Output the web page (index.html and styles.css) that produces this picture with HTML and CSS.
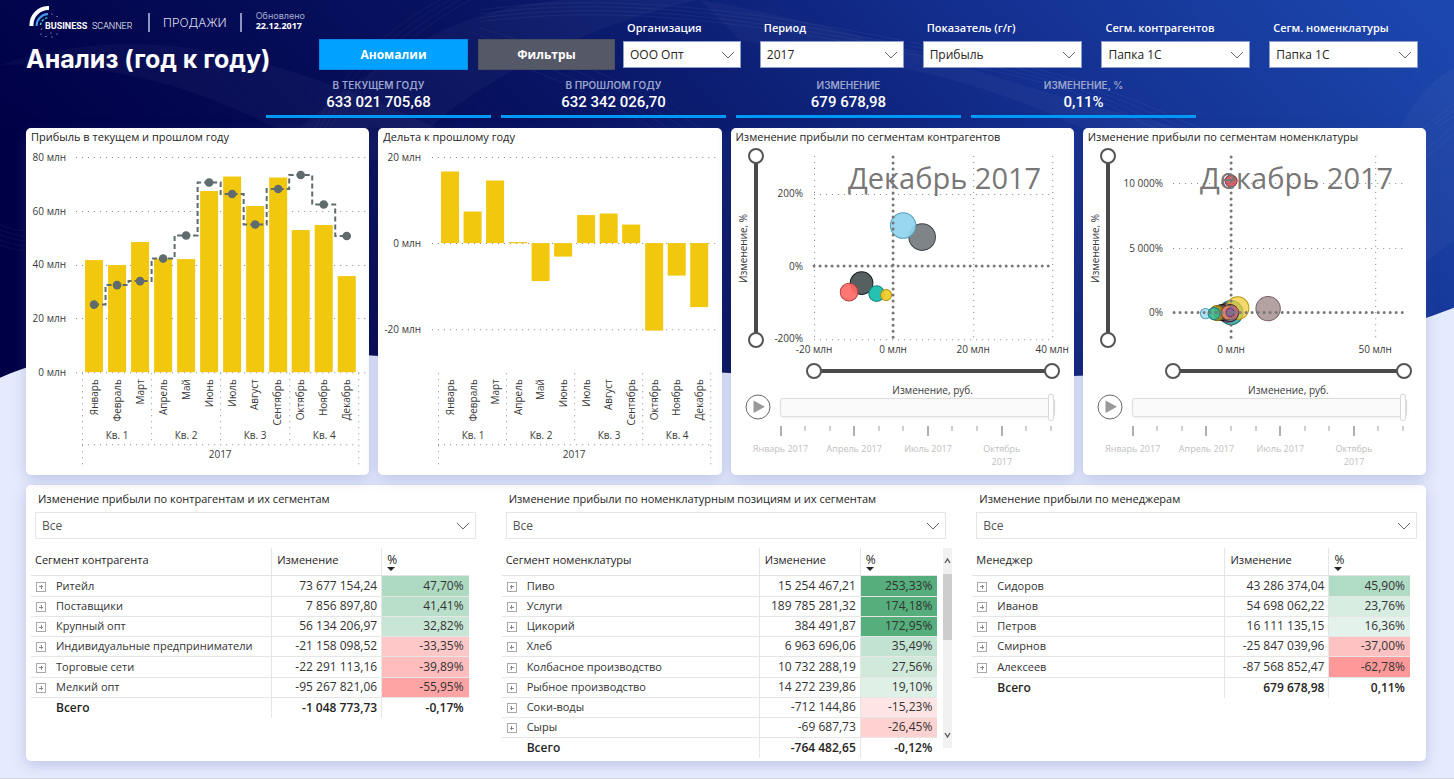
FILE: index.html
```
<!DOCTYPE html>
<html lang="ru">
<head>
<meta charset="utf-8">
<meta name="viewport" content="width=device-width, initial-scale=1">
<title>Анализ (год к году)</title>
<link rel="stylesheet" href="styles.css">
</head>
<body>
<div class="page">
  <svg class="backdrop" viewBox="0 0 1454 779" preserveAspectRatio="none" aria-hidden="true">
    <defs>
      <linearGradient id="sky" x1="0" y1="0.35" x2="1" y2="0.1">
        <stop offset="0" stop-color="#000046"/>
        <stop offset="0.35" stop-color="#07125f"/>
        <stop offset="0.7" stop-color="#132f8f"/>
        <stop offset="1" stop-color="#1c47ae"/>
      </linearGradient>
    </defs>
    <rect width="1454" height="779" fill="#e5ebfe"/>
    <path fill="url(#sky)" d="M0 0H1454V308C1340 352 1220 370 1080 376C980 380 850 379 725 373C620 368 500 360 375 356C250 349 110 330 0 378Z"/>
    <path fill="#fff" fill-opacity="0.03" d="M0 65C90 35 180 40 260 62C340 84 420 118 500 160H330C220 90 120 62 0 65Z"/>
    <path fill="#fff" fill-opacity="0.03" d="M300 128C380 60 450 10 560 0H700C600 20 480 80 430 128Z"/>
    <path fill="#fff" fill-opacity="0.03" d="M700 0C880 30 980 80 1180 128H1080C960 70 860 60 740 40Z"/>
    <path fill="#fff" fill-opacity="0.03" d="M1400 128C1420 90 1440 75 1454 68V240L1426 262V128Z"/>
    <g fill="none" stroke="#fff" stroke-opacity="0.05">
      <path d="M315 128C350 60 400 20 440 0"/><path d="M320 128C356 62 408 22 450 0"/><path d="M325 128C362 64 416 24 460 0"/><path d="M330 128C368 66 424 26 470 0"/>
      <path d="M480 10C640 -12 800 20 960 52S1150 110 1200 128"/><path d="M480 14C640 -8 800 24 960 56S1140 112 1185 128"/><path d="M480 18C640 -4 800 28 960 60S1130 114 1170 128"/><path d="M480 22C640 0 800 32 960 64S1120 116 1155 128"/>
      <path d="M480 28C560 50 640 90 700 128"/><path d="M480 36C556 58 630 94 684 128"/><path d="M480 44C552 66 620 98 668 128"/><path d="M480 52C548 74 610 102 652 128"/>
      <path d="M0 225C10 229 20 231 26 231M0 230C10 234 20 236 26 236M0 235C10 239 20 241 26 241M0 240C10 244 20 246 26 246M0 245C10 249 20 251 26 251"/>
      <path d="M1424 128L1454 104M1430 128L1454 110M1436 128L1454 116M1426 150L1454 126M1426 158L1454 134"/>
    </g>
  </svg>

  <header class="header">
    <div class="top">
      <div class="brand">
        <div class="brand-line">
          <svg class="logo" width="106" height="32" viewBox="26 5 106 32" role="img" aria-label="Business Scanner">
            <path d="M31.500 25A17 17 0 0 1 49 7" fill="none" stroke="#fff" stroke-width="4"/>
            <path d="M36.500 25A12 12 0 0 1 48 13" fill="none" stroke="#4c9be8" stroke-width="2"/>
            <path d="M40.500 24A9 9 0 0 1 48 16.500" fill="none" stroke="#3cc6b4" stroke-width="1.500" stroke-dasharray="2.500 1.500"/>
            <g fill="#cdd3ea"><circle cx="52" cy="13" r=".6"/><circle cx="57" cy="15.500" r=".6"/><circle cx="41" cy="33" r=".6"/><circle cx="46" cy="35.500" r=".6"/><circle cx="52" cy="36" r=".6"/><circle cx="57" cy="33" r=".6"/><circle cx="41.500" cy="28" r=".6"/><circle cx="51" cy="32" r=".6"/></g>
            <text class="logo-bold" x="45" y="28">BUSINESS</text>
            <text class="logo-thin" x="92" y="28">SCANNER</text>
          </svg>
          <span class="section">ПРОДАЖИ</span>
          <p class="updated">Обновлено<b>22.12.2017</b></p>
        </div>
        <h1>Анализ (год к году)</h1>
      </div>
      <div class="actions">
        <button class="btn btn-primary" type="button">Аномалии</button>
        <button class="btn btn-muted" type="button">Фильтры</button>
      </div>
      <div class="filters">
        <div class="filter"><label for="org">Организация</label><select id="org"><option>ООО Опт</option></select></div>
        <div class="filter"><label for="period">Период</label><select id="period"><option>2017</option></select></div>
        <div class="filter"><label for="metric">Показатель (г/г)</label><select id="metric"><option>Прибыль</option></select></div>
        <div class="filter"><label for="partner">Сегм. контрагентов</label><select id="partner"><option>Папка 1С</option></select></div>
        <div class="filter"><label for="item">Сегм. номенклатуры</label><select id="item"><option>Папка 1С</option></select></div>
      </div>
    </div>
    <dl class="kpis">
      <div class="kpi"><dt>В ТЕКУЩЕМ ГОДУ</dt><dd>633 021 705,68</dd></div>
      <div class="kpi"><dt>В ПРОШЛОМ ГОДУ</dt><dd>632 342 026,70</dd></div>
      <div class="kpi"><dt>ИЗМЕНЕНИЕ</dt><dd>679 678,98</dd></div>
      <div class="kpi"><dt>ИЗМЕНЕНИЕ, %</dt><dd>0,11%</dd></div>
    </dl>
  </header>

  <main class="content">
    <div class="cards">
      <section class="card">
        <h2>Прибыль в текущем и прошлом году</h2>
        <svg class="chart" viewBox="26 148 343 327" role="img" aria-label="Прибыль по месяцам">
          <g class="grid"><path d="M76 157.500H365M76 211.500H365M76 265.500H365M76 318.500H365M76 372.500H365"/></g>
          <g class="lbl end"><text x="66" y="161">80 млн</text><text x="66" y="215">60 млн</text><text x="66" y="268">40 млн</text><text x="66" y="322">20 млн</text><text x="66" y="376">0 млн</text></g>
          <g class="bars">
            <rect x="85" y="260" width="18" height="112"/><rect x="108" y="265" width="18" height="107"/><rect x="131" y="242" width="18" height="130"/>
            <rect x="154" y="258.500" width="18" height="113.500"/><rect x="177" y="259" width="18" height="113"/><rect x="200" y="191" width="18" height="181"/>
            <rect x="223" y="176.500" width="18" height="195.500"/><rect x="246" y="206" width="18" height="166"/><rect x="269" y="177.500" width="18" height="194.500"/>
            <rect x="291.500" y="230" width="18" height="142"/><rect x="314.500" y="225" width="18" height="147"/><rect x="337.500" y="276" width="18" height="96"/>
          </g>
          <path class="step" d="M94 304.500H105.500V285H128.500V281H151.500V258.500H174.500V235.500H197.500V182.500H220.500V194H243.500V224.500H266.500V189H289V175H312V204.500H335V236H346.500"/>
          <g class="dots"><circle cx="94" cy="304.500" r="4.300"/><circle cx="117" cy="285" r="4.300"/><circle cx="140" cy="281" r="4.300"/><circle cx="163" cy="258.500" r="4.300"/><circle cx="186" cy="235.500" r="4.300"/><circle cx="209" cy="182.500" r="4.300"/><circle cx="232" cy="194" r="4.300"/><circle cx="255" cy="224.500" r="4.300"/><circle cx="278" cy="189" r="4.300"/><circle cx="300.500" cy="175" r="4.300"/><circle cx="323.500" cy="204.500" r="4.300"/><circle cx="346.500" cy="236" r="4.300"/></g>
          <g class="grid"><path d="M82.500 373V464M151.500 373V444M220.500 373V444M289.500 373V444M358.500 373V464M82 444.500H358"/></g>
          <g class="lbl end">
            <text transform="translate(98 379) rotate(-90)">Январь</text><text transform="translate(121 379) rotate(-90)">Февраль</text><text transform="translate(144 379) rotate(-90)">Март</text>
            <text transform="translate(167 379) rotate(-90)">Апрель</text><text transform="translate(190 379) rotate(-90)">Май</text><text transform="translate(213 379) rotate(-90)">Июнь</text>
            <text transform="translate(236 379) rotate(-90)">Июль</text><text transform="translate(258 379) rotate(-90)">Август</text><text transform="translate(281 379) rotate(-90)">Сентябрь</text>
            <text transform="translate(304 379) rotate(-90)">Октябрь</text><text transform="translate(327 379) rotate(-90)">Ноябрь</text><text transform="translate(350 379) rotate(-90)">Декабрь</text>
          </g>
          <g class="lbl mid"><text x="117" y="439">Кв. 1</text><text x="186" y="439">Кв. 2</text><text x="255" y="439">Кв. 3</text><text x="324" y="439">Кв. 4</text><text x="220" y="458">2017</text></g>
        </svg>
      </section>

      <section class="card">
        <h2>Дельта к прошлому году</h2>
        <svg class="chart" viewBox="378 148 343 327" role="img" aria-label="Дельта по месяцам">
          <g class="grid"><path d="M432 157.500H715M432 243.500H715M432 329.500H715"/></g>
          <g class="lbl end"><text x="421" y="161">20 млн</text><text x="421" y="247">0 млн</text><text x="421" y="333">-20 млн</text></g>
          <g class="bars">
            <rect x="441" y="171.500" width="18" height="71.500"/><rect x="463.500" y="211.500" width="18" height="31.500"/><rect x="486" y="180.500" width="18" height="62.500"/>
            <rect x="509" y="242" width="18" height="1.200"/><rect x="531.500" y="243" width="18" height="38"/><rect x="554" y="243" width="18" height="13.500"/>
            <rect x="577" y="215" width="18" height="28"/><rect x="599.500" y="213.500" width="18" height="29.500"/><rect x="622" y="224.500" width="18" height="18.500"/>
            <rect x="645" y="243" width="18" height="87.500"/><rect x="667.500" y="243" width="18" height="32.500"/><rect x="690" y="243" width="18" height="64"/>
          </g>
          <g class="grid"><path d="M438.500 373V464M506.500 373V444M574.500 373V444M642.500 373V444M710.500 373V464M438 444.500H710"/></g>
          <g class="lbl end">
            <text transform="translate(454 379) rotate(-90)">Январь</text><text transform="translate(477 379) rotate(-90)">Февраль</text><text transform="translate(499 379) rotate(-90)">Март</text>
            <text transform="translate(522 379) rotate(-90)">Апрель</text><text transform="translate(544 379) rotate(-90)">Май</text><text transform="translate(567 379) rotate(-90)">Июнь</text>
            <text transform="translate(590 379) rotate(-90)">Июль</text><text transform="translate(612 379) rotate(-90)">Август</text><text transform="translate(635 379) rotate(-90)">Сентябрь</text>
            <text transform="translate(658 379) rotate(-90)">Октябрь</text><text transform="translate(680 379) rotate(-90)">Ноябрь</text><text transform="translate(703 379) rotate(-90)">Декабрь</text>
          </g>
          <g class="lbl mid"><text x="473" y="439">Кв. 1</text><text x="541" y="439">Кв. 2</text><text x="609" y="439">Кв. 3</text><text x="677" y="439">Кв. 4</text><text x="574" y="458">2017</text></g>
        </svg>
      </section>

      <section class="card scatter">
        <h2>Изменение прибыли по сегментам контрагентов</h2>
        <div class="plot">
          <span class="axis-name vertical">Изменение, %</span>
          <div class="dual dual-v"><input type="range" value="0" aria-label="Нижняя граница, %"><input type="range" value="100" aria-label="Верхняя граница, %"></div>
          <svg class="chart" viewBox="764 148 310 209" role="img" aria-label="Сегменты контрагентов">
            <g class="lbl end"><text x="803" y="197">200%</text><text x="803" y="270">0%</text><text x="803" y="342">-200%</text></g>
            <g class="lbl mid"><text x="814" y="353">-20 млн</text><text x="893" y="353">0 млн</text><text x="973" y="353">20 млн</text><text x="1052" y="353">40 млн</text></g>
            <g class="grid"><path d="M814.500 156V339M973.500 156V339M1052.500 156V339M814 194.500H1052M814 339.500H1052"/></g>
            <g fill-opacity="0.92">
              <circle cx="922" cy="237" r="13.300" fill="#737a7d" stroke="#3c4547"/>
              <circle cx="903" cy="225.500" r="12.700" fill="#8fd4ec" stroke="#589fba"/>
              <circle cx="861.500" cy="283" r="11.300" fill="#485352" stroke="#161d1f"/>
              <circle cx="849" cy="292" r="8.800" fill="#fd6a66" stroke="#bb4240"/>
              <circle cx="876.500" cy="293.500" r="7.800" fill="#12bcad" stroke="#1b897f"/>
              <circle cx="886" cy="295" r="5.500" fill="#f1cb24" stroke="#ad8d0f"/>
            </g>
            <g class="zero"><path d="M893 157V339M814 266H1052"/></g>
            <text class="stamp" x="1041" y="189">Декабрь 2017</text>
          </svg>
        </div>
        <div class="axis-x">
          <div class="dual dual-h"><input type="range" value="0" aria-label="Нижняя граница, руб."><input type="range" value="100" aria-label="Верхняя граница, руб."></div>
          <span class="axis-name">Изменение, руб.</span>
        </div>
        <div class="player">
          <button class="play" type="button" aria-label="Воспроизвести"><svg width="26" height="26" viewBox="0 0 26 26"><circle cx="13" cy="13" r="12" fill="#fff" stroke="#666"/><path d="M8.500 6.500V19L20 12.700Z" fill="#999"/></svg></button>
          <div class="timeline">
            <input class="time" type="range" min="1" max="12" value="12" aria-label="Месяц">
            <div class="ticks"><i class="major"></i><i></i><i></i><i class="major"></i><i></i><i></i><i class="major"></i><i></i><i></i><i class="major"></i><i></i><i></i></div>
            <div class="months"><span>Январь 2017</span><span>Апрель 2017</span><span>Июль 2017</span><span>Октябрь<br>2017</span></div>
          </div>
        </div>
      </section>

      <section class="card scatter scatter-wide">
        <h2>Изменение прибыли по сегментам номенклатуры</h2>
        <div class="plot">
          <span class="axis-name vertical">Изменение, %</span>
          <div class="dual dual-v"><input type="range" value="0" aria-label="Нижняя граница, %"><input type="range" value="100" aria-label="Верхняя граница, %"></div>
          <svg class="chart" viewBox="1116 148 310 209" role="img" aria-label="Сегменты номенклатуры">
            <g class="lbl end"><text x="1163" y="187">10 000%</text><text x="1163" y="252">5 000%</text><text x="1163" y="316">0%</text></g>
            <g class="lbl mid"><text x="1231" y="353">0 млн</text><text x="1375" y="353">50 млн</text></g>
            <g class="grid"><path d="M1375.500 156V339M1173 183.500H1405M1173 248.500H1405"/></g>
            <g fill-opacity="0.75">
              <circle cx="1231" cy="181" r="6" fill="#c32f38" stroke="#8d2e35"/>
              <circle cx="1268" cy="308.500" r="12.200" fill="#9b8183" stroke="#7b6063"/>
              <circle cx="1231" cy="312.500" r="12" fill="#13938c" stroke="#0f6d68"/>
              <circle cx="1227" cy="312.500" r="9.500" fill="#9b6ba0" stroke="#4f3154"/>
              <circle cx="1222" cy="312.500" r="8" fill="#3b4445" stroke="#111"/>
              <circle cx="1217" cy="313" r="7.500" fill="#c7a21a" stroke="#84690c"/>
              <circle cx="1237.500" cy="308" r="11.300" fill="#f3cc3c" stroke="#b8950f"/>
              <circle cx="1230" cy="313" r="8.500" fill="#8b6aa8" stroke="#222"/>
              <circle cx="1228" cy="312.500" r="7" fill="#ee8c63" stroke="#8e4b30"/>
              <circle cx="1205.500" cy="313.500" r="5.200" fill="#8fd4ec" stroke="#589fba"/>
              <circle cx="1214" cy="313.500" r="6" fill="#20bfa9" stroke="#197f72"/>
              <circle cx="1232" cy="312" r="6" fill="#a8718d" stroke="#dc5a4d"/>
              <circle cx="1230" cy="312.500" r="4" fill="#8a5ca6" stroke="#58386e"/>
            </g>
            <g class="zero"><path d="M1231 157V339M1174 312.500H1405"/></g>
            <text class="stamp" x="1393" y="189">Декабрь 2017</text>
          </svg>
        </div>
        <div class="axis-x">
          <div class="dual dual-h"><input type="range" value="0" aria-label="Нижняя граница, руб."><input type="range" value="100" aria-label="Верхняя граница, руб."></div>
          <span class="axis-name">Изменение, руб.</span>
        </div>
        <div class="player">
          <button class="play" type="button" aria-label="Воспроизвести"><svg width="26" height="26" viewBox="0 0 26 26"><circle cx="13" cy="13" r="12" fill="#fff" stroke="#666"/><path d="M8.500 6.500V19L20 12.700Z" fill="#999"/></svg></button>
          <div class="timeline">
            <input class="time" type="range" min="1" max="12" value="12" aria-label="Месяц">
            <div class="ticks"><i class="major"></i><i></i><i></i><i class="major"></i><i></i><i></i><i class="major"></i><i></i><i></i><i class="major"></i><i></i><i></i></div>
            <div class="months"><span>Январь 2017</span><span>Апрель 2017</span><span>Июль 2017</span><span>Октябрь<br>2017</span></div>
          </div>
        </div>
      </section>
    </div>

    <div class="panel">
      <section class="block">
        <label class="block-title" for="f1">Изменение прибыли по контрагентам и их сегментам</label>
        <select id="f1"><option>Все</option></select>
        <div class="table-wrap">
          <table>
            <colgroup><col><col class="w110"><col class="w87"></colgroup>
            <thead><tr><th>Сегмент контрагента</th><th>Изменение</th><th class="sorted">%</th></tr></thead>
            <tbody>
              <tr><td><button type="button" aria-label="Развернуть"></button>Ритейл</td><td>73 677 154,24</td><td style="background:#addac1">47,70%</td></tr>
              <tr><td><button type="button" aria-label="Развернуть"></button>Поставщики</td><td>7 856 897,80</td><td style="background:#b9dfca">41,41%</td></tr>
              <tr><td><button type="button" aria-label="Развернуть"></button>Крупный опт</td><td>56 134 206,97</td><td style="background:#c8e6d5">32,82%</td></tr>
              <tr><td><button type="button" aria-label="Развернуть"></button>Индивидуальные предприниматели</td><td>-21 158 098,52</td><td style="background:#ffc8c8">-33,35%</td></tr>
              <tr><td><button type="button" aria-label="Развернуть"></button>Торговые сети</td><td>-22 291 113,16</td><td style="background:#ffbdbd">-39,89%</td></tr>
              <tr><td><button type="button" aria-label="Развернуть"></button>Мелкий опт</td><td>-95 267 821,06</td><td style="background:#ffa4a4">-55,95%</td></tr>
            </tbody>
            <tfoot><tr><td>Всего</td><td>-1 048 773,73</td><td>-0,17%</td></tr></tfoot>
          </table>
        </div>
      </section>

      <section class="block">
        <label class="block-title" for="f2">Изменение прибыли по номенклатурным позициям и их сегментам</label>
        <select id="f2"><option>Все</option></select>
        <div class="table-wrap scrolled">
          <table>
            <colgroup><col><col class="w101"><col class="w77"></colgroup>
            <thead><tr><th>Сегмент номенклатуры</th><th>Изменение</th><th class="sorted">%</th></tr></thead>
            <tbody>
              <tr><td><button type="button" aria-label="Развернуть"></button>Пиво</td><td>15 254 467,21</td><td style="background:#55ae7b">253,33%</td></tr>
              <tr><td><button type="button" aria-label="Развернуть"></button>Услуги</td><td>189 785 281,32</td><td style="background:#55ae7b">174,18%</td></tr>
              <tr><td><button type="button" aria-label="Развернуть"></button>Цикорий</td><td>384 491,87</td><td style="background:#55ae7b">172,95%</td></tr>
              <tr><td><button type="button" aria-label="Развернуть"></button>Хлеб</td><td>6 963 696,06</td><td style="background:#c2e3d1">35,49%</td></tr>
              <tr><td><button type="button" aria-label="Развернуть"></button>Колбасное производство</td><td>10 732 288,19</td><td style="background:#d0e9db">27,56%</td></tr>
              <tr><td><button type="button" aria-label="Развернуть"></button>Рыбное производство</td><td>14 272 239,86</td><td style="background:#dff0e6">19,10%</td></tr>
              <tr><td><button type="button" aria-label="Развернуть"></button>Соки-воды</td><td>-712 144,86</td><td style="background:#ffe5e5">-15,23%</td></tr>
              <tr><td><button type="button" aria-label="Развернуть"></button>Сыры</td><td>-69 687,73</td><td style="background:#ffd2d2">-26,45%</td></tr>
            </tbody>
            <tfoot><tr><td>Всего</td><td>-764 482,65</td><td>-0,12%</td></tr></tfoot>
          </table>
          <div class="scrollbar" aria-hidden="true">
            <svg width="9" height="26" viewBox="0 0 9 26"><path d="M2 15L4.500 11L7 15" fill="none" stroke="#555" stroke-width="1.300"/></svg>
            <div class="thumb"></div>
            <svg class="down" width="9" height="26" viewBox="0 0 9 26"><path d="M2 11L4.500 15L7 11" fill="none" stroke="#555" stroke-width="1.300"/></svg>
          </div>
        </div>
      </section>

      <section class="block">
        <label class="block-title" for="f3">Изменение прибыли по менеджерам</label>
        <select id="f3"><option>Все</option></select>
        <div class="table-wrap">
          <table>
            <colgroup><col><col class="w104"><col class="w81"></colgroup>
            <thead><tr><th>Менеджер</th><th>Изменение</th><th class="sorted">%</th></tr></thead>
            <tbody>
              <tr><td><button type="button" aria-label="Развернуть"></button>Сидоров</td><td>43 286 374,04</td><td style="background:#b0dbc4">45,90%</td></tr>
              <tr><td><button type="button" aria-label="Развернуть"></button>Иванов</td><td>54 698 062,22</td><td style="background:#d7ede1">23,76%</td></tr>
              <tr><td><button type="button" aria-label="Развернуть"></button>Петров</td><td>16 111 135,15</td><td style="background:#e3f2ea">16,36%</td></tr>
              <tr><td><button type="button" aria-label="Развернуть"></button>Смирнов</td><td>-25 847 039,96</td><td style="background:#ffc2c2">-37,00%</td></tr>
              <tr><td><button type="button" aria-label="Развернуть"></button>Алексеев</td><td>-87 568 852,47</td><td style="background:#ff9999">-62,78%</td></tr>
            </tbody>
            <tfoot><tr><td>Всего</td><td>679 678,98</td><td>0,11%</td></tr></tfoot>
          </table>
        </div>
      </section>
    </div>
  </main>
</div>
</body>
</html>
```
FILE: styles.css
```
* { box-sizing: border-box; }

body {
  margin: 0;
  font-family: "Open Sans", "Noto Sans", sans-serif;
  font-size: 12px;
  color: #252423;
}

h1, h2, p, dl, dd { margin: 0; }
button, select, input { font: inherit; color: inherit; margin: 0; }

.page {
  position: relative;
  isolation: isolate;
  min-height: 100vh;
  border-bottom: 2px solid #d6d6d6;
}

.backdrop {
  position: absolute;
  inset: 0;
  z-index: -1;
  width: 100%;
  height: 100%;
}

/* Header */
.top { display: flex; padding: 0 36px 0 26px; }
.brand { flex: none; width: 293px; color: #fff; }
.brand-line { display: flex; align-items: center; padding-top: 5px; height: 44px; }
.logo { flex: none; margin-bottom: 6px; }
.logo-bold, .logo-thin { font-family: Roboto, "Open Sans", sans-serif; font-size: 9px; fill: #fff; }
.logo-bold { font-weight: 700; }
.logo-thin { font-weight: 300; }
.section {
  margin: 0 14px 4px 16px;
  padding: 0 13px;
  border-left: 2px solid #8f93bd;
  border-right: 2px solid #8f93bd;
  font: 300 12px/19px Inter, sans-serif;
  color: #dcdef0;
}
.updated { margin-bottom: 8px; font: 400 9px/10px Inter, sans-serif; color: #a9adcf; }
.updated b { display: block; font: 700 9px/10px "Open Sans", sans-serif; color: #fff; }
h1 { font: 700 25px/30px Inter, sans-serif; white-space: nowrap; }

.actions { display: flex; gap: 10px; margin: 39px 8px 0 0; height: 31px; }
.btn { border: 1px solid transparent; font-weight: 700; font-size: 12px; color: #fff; padding: 0; }
.btn-primary { width: 149px; background: #00a1ff; border-color: #1287e6; }
.btn-muted { width: 137px; background: #555867; border-color: #4a4d60; }

.filters {
  flex: 1;
  display: grid;
  grid-template-columns: 118fr 144fr 160fr 149fr 149fr;
  gap: 19px;
  padding-top: 21px;
}
.filter label { display: block; padding-left: 4px; margin-bottom: 6px; font-size: 11px; line-height: 14px; font-weight: 600; color: #fff; white-space: nowrap; }

select {
  appearance: none;
  display: block;
  width: 100%;
  height: 27px;
  padding: 0 24px 0 6px;
  border: 1px solid #e6e6e6;
  border-radius: 0;
  background: #fff url("data:image/svg+xml,%3Csvg xmlns='http://www.w3.org/2000/svg' width='14' height='8' viewBox='0 0 14 8'%3E%3Cpath d='M1 1L7 7L13 1' fill='none' stroke='%23666'/%3E%3C/svg%3E") no-repeat right 5px center;
}
.filter select { border-color: #8d9dcc; }

.kpis { display: grid; grid-template-columns: repeat(4, 225px); gap: 10px; padding: 4px 26px 10px 266px; }
.kpi { border-bottom: 3px solid #0098f7; padding-bottom: 3px; text-align: center; }
.kpi dt { font: 600 10px/14px Inter, sans-serif; color: #9aa4cd; }
.kpi dd { font: 500 15px/20px Roboto, sans-serif; color: #fff; }

/* Chart cards */
.content { padding: 0 28px 17px 26px; }
.cards { display: grid; grid-template-columns: repeat(4, 1fr); gap: 9px; margin-bottom: 10px; }
.card, .panel { background: #fff; border-radius: 5px; box-shadow: 0 4px 14px rgba(70, 85, 150, 0.25); }
.card h2 { font-weight: 400; font-size: 11px; line-height: 18px; margin-bottom: 2px; padding-left: 5px; white-space: nowrap; }
.chart { display: block; width: 100%; height: auto; }

.lbl { font-size: 10px; fill: #3a3a3a; }
.end { text-anchor: end; }
.mid { text-anchor: middle; }
.grid path { fill: none; stroke: #888; stroke-dasharray: 1 5; }
.bars { fill: #f2c80f; }
.step { fill: none; stroke: #5f6b6d; stroke-width: 2; stroke-dasharray: 5 3; }
.dots { fill: #5f6b6d; }
.zero path { fill: none; stroke: #777; stroke-width: 3; stroke-linecap: round; stroke-dasharray: 0 6; }
.stamp { font-size: 29px; fill: #777; text-anchor: end; }

.plot { display: grid; grid-template-columns: 10px 16px 1fr; align-items: start; padding-left: 7px; }
.axis-name { font-size: 10px; line-height: 16px; color: #3a3a3a; }
.vertical { writing-mode: vertical-rl; transform: rotate(180deg); line-height: 10px; height: 200px; text-align: center; white-space: nowrap; }

.dual { display: grid; }
.dual input { appearance: none; grid-area: 1 / 1; width: 100%; height: 100%; background: none; pointer-events: none; }
.dual input::-webkit-slider-thumb {
  appearance: none;
  pointer-events: auto;
  width: 16px;
  height: 16px;
  border: 2px solid #555;
  border-radius: 50%;
  background: #fff;
}
.dual-v { width: 16px; height: 200px; background: linear-gradient(#4a4a48, #4a4a48) center / 4px calc(100% - 16px) no-repeat; }
.dual-v input { writing-mode: vertical-lr; direction: rtl; }
.dual-h { height: 16px; background: linear-gradient(#4a4a48, #4a4a48) center / calc(100% - 16px) 4px no-repeat; }

.axis-x { padding: 6px 14px 0 75px; text-align: center; }
.axis-x .axis-name { display: block; margin-top: 3px; }
.scatter-wide .axis-x { padding-left: 82px; }

.player { display: grid; grid-template-columns: 26px 1fr; gap: 9px; align-items: start; padding: 0 22px 0 14px; margin-top: -4px; }
.play { width: 26px; height: 26px; padding: 0; border: 0; background: none; }
.play svg { display: block; }
.time { appearance: none; display: block; width: calc(100% + 3px); height: 27px; background: none; }
.time::-webkit-slider-runnable-track { height: 19px; border: 1px solid #dedede; border-radius: 3px; background: #fafafa; box-shadow: 0 1px 3px rgba(0, 0, 0, 0.06); }
.time::-webkit-slider-thumb { appearance: none; width: 6px; height: 27px; margin-top: -5px; border: 1px solid #d9d9d9; border-radius: 2px; background: #fff; }
.ticks { display: flex; justify-content: space-between; margin-top: 5px; height: 10px; }
.ticks i { width: 2px; height: 5px; background: #d0d0d0; }
.ticks .major { height: 10px; background: #b0b0b0; }
.months { display: grid; grid-template-columns: repeat(4, 1fr); margin: 6px 13px 0 -36px; font-size: 9px; line-height: 13px; text-align: center; color: #c0c0c0; white-space: nowrap; }

/* Tables */
.panel { display: grid; grid-template-columns: repeat(3, minmax(0, 1fr)); gap: 30px; padding: 6px 9px 3px; }
.block-title { display: block; padding-left: 3px; margin-bottom: 5px; font-size: 11px; line-height: 16px; white-space: nowrap; }
.block select { color: #555; }
.table-wrap { display: flex; align-items: flex-start; margin: 9px 7px 0 -4px; }
.scrolled { margin-right: -6px; gap: 6px; }
table { flex: 1; table-layout: fixed; width: 100%; border-collapse: collapse; }
.w110 { width: 110px; }
.w104 { width: 104px; }
.w101 { width: 101px; }
.w87 { width: 87px; }
.w81 { width: 81px; }
.w77 { width: 77px; }
th { height: 27px; padding: 0 0 4px 4px; text-align: left; font-size: 11px; font-weight: 400; border-bottom: 1px solid #e3e3e3; }
tr { height: 20px; }
tbody tr:nth-child(4n+1), tfoot tr { height: 21px; }
td { padding: 0 4px; line-height: 16px; text-align: right; white-space: nowrap; color: #333; border-bottom: 1px solid #e6e6e6; }
td:first-child { text-align: left; font-size: 11px; }
td:last-child { padding-right: 5px; }
th + th, td + td { border-left: 1px solid #e6e6e6; }
th + th { padding-left: 5px; }
tfoot td { border-bottom: 0; font-weight: 600; color: #252423; }
tfoot td:first-child { padding-left: 25px; font-size: 12px; }
.sorted { position: relative; font-size: 12px; }
.sorted::after { content: ""; position: absolute; left: 5px; bottom: 4px; border: 4px solid transparent; border-top-color: #252423; border-bottom: 0; }
td button {
  width: 10px;
  height: 10px;
  padding: 0;
  margin: 0 10px 0 1px;
  vertical-align: -1px;
  border: 1px solid #aaa;
  background:
    linear-gradient(#888, #888) center / 4px 1px no-repeat,
    linear-gradient(#888, #888) center / 1px 4px no-repeat,
    #fff;
}
.scrollbar { display: flex; flex-direction: column; flex: none; width: 9px; height: 200px; background: #f1f1f1; }
.thumb { height: 66px; background: #cdcdcd; }
.down { margin-top: auto; }
```
